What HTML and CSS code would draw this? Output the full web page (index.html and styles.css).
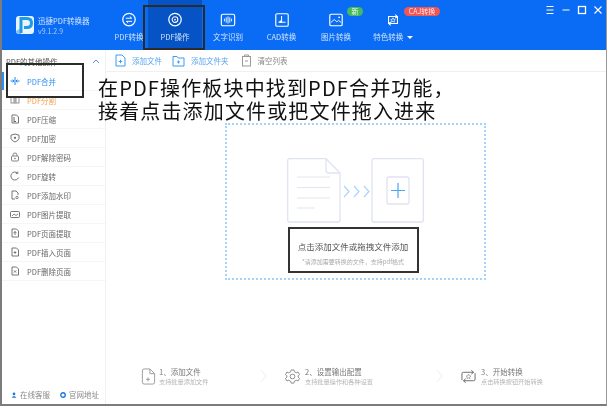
FILE: index.html
```html
<!DOCTYPE html>
<html lang="zh">
<head>
<meta charset="utf-8">
<title>迅捷PDF转换器</title>
<link rel="stylesheet" href="styles.css">
</head>
<body>
<div class="app">
  <header class="topbar">
    <div class="brand">
      <svg class="logo" viewBox="0 0 18 18"><rect width="18" height="18" rx="3" fill="#e8f4ff"/><path d="M0 15 L5 12 V18 H3 Q0 18 0 15Z" fill="#7fc4f5"/><path d="M5 17 V2.5 H11 Q15.5 2.5 15.5 7 Q15.5 11.5 11 11.5 H8" fill="none" stroke="#1e9be8" stroke-width="3"/></svg>
      <div class="brand-text"><div class="brand-name">迅捷PDF转换器</div><div class="brand-ver">v9.1.2.9</div></div>
    </div>
    <nav class="nav">
      <div class="nav-item">
        <svg class="nav-icon" viewBox="0 0 18 18"><circle cx="9" cy="8.5" r="7" fill="none" stroke="#fff" stroke-width="1.4"/><path d="M5.5 7H12L10 5.2M12.5 10.5H6L8 12.3" fill="none" stroke="#fff" stroke-width="1.1"/></svg>
        <span>PDF转换</span>
      </div>
      <div class="nav-item nav-active">
        <svg class="nav-icon" viewBox="0 0 18 18"><circle cx="9" cy="8.5" r="7" fill="none" stroke="#fff" stroke-width="1.4"/><circle cx="9" cy="8.5" r="3.2" fill="none" stroke="#fff" stroke-width="1.2"/><circle cx="9" cy="8.5" r="1" fill="#fff"/></svg>
        <span>PDF操作</span>
      </div>
      <div class="nav-item">
        <svg class="nav-icon" viewBox="0 0 18 18"><rect x="1.5" y="2.5" width="15" height="13" rx="2" fill="none" stroke="#fff" stroke-width="1.3"/><path d="M5 7.5v3M7 6v6M9 5v8M11 6v6M13 7.5v3" stroke="#fff" stroke-width="1"/></svg>
        <span>文字识别</span>
      </div>
      <div class="nav-item">
        <svg class="nav-icon" viewBox="0 0 18 18"><rect x="2" y="2" width="14" height="14" rx="1.5" fill="none" stroke="#fff" stroke-width="1.3"/><path d="M8.5 4.5V11.5M5 11.5H13" stroke="#fff" stroke-width="1.2"/><circle cx="7.500" cy="11" r="1.500" fill="#fff"/></svg>
        <span>CAD转换</span>
      </div>
      <div class="nav-item">
        <svg class="nav-icon" viewBox="0 0 18 18"><rect x="2" y="2.500" width="14" height="13" rx="1.500" fill="none" stroke="#fff" stroke-width="1.300"/><path d="M3 12L7 8.500L10 11L12 9.500L15 12" fill="none" stroke="#fff" stroke-width="1"/><circle cx="12.500" cy="6" r="1" fill="#fff"/></svg>
        <span>图片转换</span>
        <b class="badge badge-new">新</b>
      </div>
      <div class="nav-item">
        <svg class="nav-icon" viewBox="0 0 18 18"><path d="M4 13.500V5H13M11.500 3L13.800 5L11.500 7M14 4.500V13H5M6.500 15L4.200 13L6.500 11" fill="none" stroke="#fff" stroke-width="1.200"/><path d="M9 6.500L9.800 8.300L11.600 8.500L10.300 9.700L10.600 11.400L9 10.500L7.400 11.400L7.700 9.700L6.400 8.500L8.200 8.300Z" fill="none" stroke="#fff" stroke-width=".8"/></svg>
        <span>特色转换 <i class="caret"></i></span>
        <b class="badge badge-caj">CAJ转换</b>
      </div>
    </nav>
    <div class="winctl">
      <svg class="ctl" viewBox="0 0 10 10"><path d="M1.500 1.500H8.500M1.500 5H8.500M1.500 8.500H8.500" stroke="#fff" stroke-width="1"/></svg>
      <svg class="ctl" viewBox="0 0 10 10"><path d="M1.500 5H8.500" stroke="#fff" stroke-width="1"/></svg>
      <svg class="ctl" viewBox="0 0 10 10"><rect x="1.500" y="1.500" width="7" height="7" fill="none" stroke="#fff" stroke-width="1.300"/></svg>
      <svg class="ctl" viewBox="0 0 10 10"><path d="M1.500 1.500L8.500 8.500M8.500 1.500L1.500 8.500" stroke="#fff" stroke-width="1.100"/></svg>
    </div>
  </header>

  <div class="content">
    <aside class="sidebar">
      <div class="side-head"><span>PDF的其他操作</span><svg class="chev" viewBox="0 0 8 5"><path d="M1 4L4 1L7 4" fill="none" stroke="#5b8fc9" stroke-width="1"/></svg></div>
      <ul class="menu">
        <li class="menu-item is-active"><svg class="mi" viewBox="0 0 10 10"><path d="M5 1V9M.5 5H3.800M2.600 3.600L4 5L2.600 6.400M9.500 5H6.200M7.400 3.600L6 5L7.400 6.400" fill="none" stroke="#1e88f0" stroke-width="1"/></svg>PDF合并</li>
        <li class="menu-item is-orange"><svg class="mi" viewBox="0 0 10 10"><rect x="1" y="2" width="3" height="6" fill="none" stroke="#888" stroke-width=".9"/><rect x="6" y="2" width="3" height="6" fill="none" stroke="#888" stroke-width=".9"/><path d="M5 1V9" stroke="#888" stroke-width=".9"/></svg>PDF分割</li>
        <li class="menu-item"><svg class="mi" viewBox="0 0 10 10"><path d="M2 1H6.500L8.500 3V9H2Z" fill="none" stroke="#666" stroke-width=".9"/><path d="M4 3V7M3.500 7.500H6" stroke="#666" stroke-width="1"/></svg>PDF压缩</li>
        <li class="menu-item"><svg class="mi" viewBox="0 0 10 10"><path d="M5 1L9 2.200V5.500Q8 8 5 9Q2 8 1 5.500V2.200Z" fill="none" stroke="#666" stroke-width=".9"/><circle cx="5" cy="4.800" r="1.100" fill="#666"/></svg>PDF加密</li>
        <li class="menu-item"><svg class="mi" viewBox="0 0 10 10"><rect x="1.500" y="4" width="7" height="5" rx="1" fill="none" stroke="#777" stroke-width=".9"/><path d="M3 4V2.800Q3 1 5 1Q7 1 7 2.800V4" fill="none" stroke="#777" stroke-width=".9"/><circle cx="5" cy="6.500" r=".8" fill="#777"/></svg>PDF解除密码</li>
        <li class="menu-item"><svg class="mi" viewBox="0 0 10 10"><path d="M8.600 6.500A4 4 0 1 1 7.500 2" fill="none" stroke="#666" stroke-width=".9"/><path d="M7.800 .6V2.600H5.800" fill="none" stroke="#666" stroke-width=".8"/></svg>PDF旋转</li>
        <li class="menu-item"><svg class="mi" viewBox="0 0 10 10"><path d="M8 5V3L6 1H2V9H5" fill="none" stroke="#666" stroke-width=".9"/><circle cx="7" cy="7.500" r="1.200" fill="none" stroke="#666" stroke-width=".8"/></svg>PDF添加水印</li>
        <li class="menu-item"><svg class="mi" viewBox="0 0 10 10"><rect x=".5" y="2.500" width="9" height="6" rx="1" fill="none" stroke="#666" stroke-width=".9"/><path d="M2 7L4 5L6 6.500L8 5" fill="none" stroke="#666" stroke-width=".8"/></svg>PDF图片提取</li>
        <li class="menu-item"><svg class="mi" viewBox="0 0 10 10"><path d="M2 1H6.500L8.500 3V9H2Z" fill="none" stroke="#666" stroke-width=".9"/><path d="M5 3.500V7M3.500 5.200L5 3.500L6.500 5.200" fill="none" stroke="#666" stroke-width=".9"/></svg>PDF页面提取</li>
        <li class="menu-item"><svg class="mi" viewBox="0 0 10 10"><path d="M2 1H6.500L8.500 3V9H2Z" fill="none" stroke="#666" stroke-width=".9"/><path d="M3.700 5.500H6.300M5 4.200V6.800" stroke="#666" stroke-width=".9"/></svg>PDF插入页面</li>
        <li class="menu-item"><svg class="mi" viewBox="0 0 10 10"><path d="M2 1H6.500L8.500 3V9H2Z" fill="none" stroke="#666" stroke-width=".9"/><path d="M4 4.500L6 6.500M6 4.500L4 6.500" stroke="#666" stroke-width=".9"/></svg>PDF删除页面</li>
      </ul>
      <div class="side-foot">
        <span class="foot-link"><svg class="fi" viewBox="0 0 8 8"><circle cx="4" cy="2.500" r="1.800" fill="#1e78e0"/><path d="M.8 7.500Q4 3 7.200 7.500Z" fill="#1e78e0"/></svg>在线客服</span>
        <span class="foot-link"><svg class="fi" viewBox="0 0 8 8"><circle cx="4" cy="4" r="3" fill="none" stroke="#1e78e0" stroke-width="1.800"/></svg>官网地址</span>
      </div>
    </aside>

    <main class="main">
      <div class="toolbar">
        <span class="tool"><svg class="ti" viewBox="0 0 11 13"><path d="M1 1H7L10 4V12H1Z" fill="#fff" stroke="#3d9bf0" stroke-width="1"/><path d="M3.800 7.500H7.200M5.500 5.800V9.200" stroke="#3d9bf0" stroke-width="1"/></svg>添加文件</span>
        <span class="tool"><svg class="ti ti-wide" viewBox="0 0 13 12"><path d="M1 1.500H5L6.200 3H12V11H1Z" fill="#fff" stroke="#3d9bf0" stroke-width="1"/><path d="M5 7H8M6.500 5.500V8.500" stroke="#3d9bf0" stroke-width="1"/></svg>添加文件夹</span>
        <span class="tool tool-grey"><svg class="ti" viewBox="0 0 11 13"><rect x="1.500" y="2.500" width="8" height="9.500" fill="none" stroke="#999" stroke-width="1"/><path d="M3.500 2.500V1H7.500V2.500M4 7H7" fill="none" stroke="#999" stroke-width="1"/></svg>清空列表</span>
      </div>

      <section class="stage">
        <div class="drop">
          <div class="art">
            <svg class="art-svg" viewBox="0 0 137 65">
              <path d="M2.500 .7H39L53 15V62Q53 64 51 64H2.500Q.7 64 .7 62V2.500Q.7 .7 2.500 .7Z" fill="#fff" stroke="#dfe4f2" stroke-width="1.300"/>
              <path d="M39 1V12Q39 15 42 15H53" fill="none" stroke="#dfe4f2" stroke-width="1.300"/>
              <path d="M10 19H43M10 29.500H43M10 40H43M10 50H28" stroke="#e3e6ee" stroke-width="1.200"/>
              <path d="M57 28L62 33.500L57 39M67 28L72 33.500L67 39M77 28L82 33.500L77 39" fill="none" stroke="#a9d4fa" stroke-width="1.200"/>
              <rect x="85" y=".7" width="51.300" height="63.300" rx="2" fill="#fff" stroke="#dfe4f2" stroke-width="1.300"/>
              <rect x="100" y="19" width="22" height="27" rx="2" fill="#fff" stroke="#dfe4f2" stroke-width="1.300"/>
              <path d="M111 25V40M104 32.500H118" stroke="#4ea6f2" stroke-width="1.200"/>
            </svg>
          </div>
          <div class="caption">
            <div class="cap-main">点击添加文件或拖拽文件添加</div>
            <div class="cap-sub">*请添加需要转换的文件，支持pdf格式</div>
          </div>
        </div>
      </section>

      <footer class="steps">
        <div class="step step-first">
          <svg class="step-icon" viewBox="0 0 15 18"><path d="M1 3Q1 1 3 1H9L14 6V15Q14 17 12 17H3Q1 17 1 15Z M9 1V6H14" fill="none" stroke="#999" stroke-width="1"/><path d="M5 12H9M7 10V14" stroke="#999" stroke-width="1"/></svg>
          <div><div class="step-title">1、添加文件</div><div class="step-sub">支持批量添加文件</div></div>
        </div>
        <svg class="step-chev" viewBox="0 0 7 14"><path d="M1 1L6 7L1 13" fill="none" stroke="#eee" stroke-width="1"/></svg>
        <div class="step step-second">
          <svg class="step-icon" viewBox="0 0 16 16"><circle cx="8" cy="8" r="2.500" fill="none" stroke="#888" stroke-width="1"/><path d="M6.500 1H9.500L10 3L12 4L14 3.300L15.500 6L14 7.300V8.700L15.500 10L14 12.700L12 12L10 13L9.500 15H6.500L6 13L4 12L2 12.700L.5 10L2 8.700V7.300L.5 6L2 3.300L4 4L6 3Z" fill="none" stroke="#888" stroke-width="1"/></svg>
          <div><div class="step-title">2、设置输出配置</div><div class="step-sub">支持批量操作和各种设置</div></div>
        </div>
        <svg class="step-chev" viewBox="0 0 7 14"><path d="M1 1L6 7L1 13" fill="none" stroke="#eee" stroke-width="1"/></svg>
        <div class="step">
          <svg class="step-icon" viewBox="0 0 16 16"><path d="M1 12V5Q1 3.500 2.500 3.500H13M11 1.500L13.500 3.500L11 5.500M15 4.500V11Q15 12.500 13.500 12.500H3M5 10.500L2.500 12.500L5 14.500" fill="none" stroke="#666" stroke-width="1"/><path d="M8 5.500L8.800 7.300L10.600 7.500L9.300 8.700L9.600 10.300L8 9.500L6.400 10.300L6.700 8.700L5.400 7.500L7.200 7.300Z" fill="none" stroke="#888" stroke-width=".7"/></svg>
          <div><div class="step-title">3、开始转换</div><div class="step-sub">点击转换按钮开始转换</div></div>
        </div>
      </footer>
    </main>
  </div>

  <div class="mark mark-nav"></div>
  <div class="mark mark-side"></div>
  <div class="note">在PDF操作板块中找到PDF合并功能，<br>接着点击添加文件或把文件拖入进来</div>
</div>
</body>
</html>
```
FILE: styles.css
```css
* { box-sizing: border-box; }
html, body { margin: 0; padding: 0; background: #fff; }
body { font-family: "Noto Sans CJK SC", "Noto Sans", sans-serif; }
ul { list-style: none; margin: 0; padding: 0; }

.app {
  position: relative;
  width: 607px;
  height: 406px;
  display: flex;
  flex-direction: column;
  border-left: 2px solid #7c7c7c;
  border-right: 1px solid #9a9a9a;
  border-bottom: 2px solid #7c7c7c;
  overflow: hidden;
  background: #fff;
  filter: blur(.3px);
}

/* top bar */
.topbar {
  flex: 0 0 50px;
  display: flex;
  background: #0a6cf5;
  color: #fff;
}
.brand {
  width: 108px;
  display: flex;
  align-items: center;
  gap: 4px;
  padding-left: 14px;
}
.logo { width: 18px; height: 18px; flex: none; }
.brand-name { font-size: 7.5px; line-height: 11px; color: #d5e6ff; white-space: nowrap; }
.brand-ver { font-size: 7px; line-height: 10px; color: #a9cbfb; }
.nav {
  display: grid;
  grid-template-columns: 38px 54px 52px 55px 54px 60px;
}
.nav-item {
  position: relative;
  display: flex;
  flex-direction: column;
  align-items: center;
  padding-top: 12px;
  font-size: 7.5px;
  line-height: 11px;
  color: #cfe2ff;
  white-space: nowrap;
}
.nav-active { background: #0553c4; }
.nav-icon { width: 16px; height: 16px; margin-bottom: 3px; flex: none; }
.caret {
  display: inline-block;
  width: 0;
  height: 0;
  margin-left: 2px;
  vertical-align: 1px;
  border-left: 3px solid transparent;
  border-right: 3px solid transparent;
  border-top: 3px solid #fff;
}
.badge {
  position: absolute;
  top: 7px;
  height: 9px;
  border-radius: 5px;
  font-size: 7px;
  font-weight: 400;
  line-height: 9px;
  text-align: center;
  color: #e9fff0;
}
.badge-new { left: 38px; width: 16px; background: #46b95c; }
.badge-caj { left: 41px; width: 36px; background: #f25555; color: #ffe6e6; }
.winctl {
  margin-left: auto;
  display: flex;
  align-items: flex-start;
  gap: 6px;
  padding: 5px 3px 0 0;
}
.ctl { width: 10px; height: 10px; }

/* body */
.content { flex: 1; display: flex; min-height: 0; }
.sidebar {
  width: 104px;
  flex: none;
  display: flex;
  flex-direction: column;
  border-right: 1px solid #f0f0f0;
}
.side-head {
  height: 22px;
  flex: none;
  display: flex;
  align-items: center;
  justify-content: space-between;
  padding: 0 5px 0 4px;
  font-size: 7.5px;
  color: #555;
}
.chev { width: 8px; height: 5px; }
.menu-item {
  height: 19px;
  display: flex;
  align-items: center;
  gap: 7px;
  padding-left: 8px;
  font-size: 7.5px;
  color: #666;
  border-bottom: 1px solid #f6f6f6;
  white-space: nowrap;
}
.mi { width: 10px; height: 10px; flex: none; }
.is-active { color: #2f8ff0; box-shadow: inset 2px 0 0 #2f8ff0; }
.is-orange { color: #f0a04b; }
.side-foot {
  margin-top: auto;
  display: flex;
  gap: 10px;
  padding: 0 0 3px 9px;
  font-size: 7.5px;
  line-height: 12px;
  color: #8a8a8a;
}
.foot-link { display: flex; align-items: center; gap: 3px; white-space: nowrap; }
.fi { width: 6px; height: 6px; flex: none; }

/* main */
.main { flex: 1; min-width: 0; display: flex; flex-direction: column; }
.toolbar {
  height: 22px;
  flex: none;
  display: flex;
  align-items: center;
  gap: 10px;
  padding-left: 9px;
  border-bottom: 1px solid #f0f0f0;
}
.tool {
  display: flex;
  align-items: center;
  gap: 6px;
  font-size: 7.5px;
  color: #5aa5ee;
  white-space: nowrap;
}
.tool-grey { color: #888; margin-left: 2px; }
.ti { width: 11px; height: 13px; flex: none; }
.ti-wide { width: 13px; height: 12px; }

.stage { flex: 1; min-height: 0; padding: 51px 0 0 119px; }
.drop {
  width: 261px;
  height: 157px;
  display: flex;
  flex-direction: column;
  align-items: center;
  padding-top: 33px;
  border: 2px dotted #a6d3fb;
}
.art { height: 66px; flex: none; }
.art-svg { width: 137px; height: 65px; display: block; }
.caption {
  width: 131px;
  height: 46px;
  margin: 3px 5px 0 0;
  border: 2px solid #333;
  text-align: center;
  padding-top: 11px;
  background: #fff;
}
.cap-main { font-size: 8.5px; line-height: 13px; color: #555; white-space: nowrap; }
.cap-sub { font-size: 6px; line-height: 10px; margin-top: 4px; color: #aaa; white-space: nowrap; }

.steps {
  flex: none;
  height: 50px;
  display: flex;
  align-items: flex-start;
  padding: 12px 0 0 35px;
}
.step { display: flex; align-items: center; gap: 5px; }
.step-first { width: 119px; gap: 3px; }
.step-second { width: 151px; }
.step-icon { width: 15px; height: 17px; flex: none; }
.step-title { font-size: 7.5px; line-height: 11px; color: #777; white-space: nowrap; }
.step-sub { font-size: 6.2px; line-height: 10px; color: #b5b5b5; white-space: nowrap; }
.step-chev { width: 7px; height: 14px; flex: none; margin: 3px 18px 0 0; }

/* annotations laid over the app */
.mark { position: absolute; border: 2px solid #2b2b2b; }
.mark-nav { left: 141px; top: 5px; width: 62px; height: 45px; }
.mark-side { left: 4px; top: 63px; width: 78px; height: 35px; }
.note {
  position: absolute;
  left: 96px;
  top: 76px;
  font-size: 20px;
  line-height: 23px;
  letter-spacing: 1.15px;
  color: #111;
  white-space: nowrap;
}
```
